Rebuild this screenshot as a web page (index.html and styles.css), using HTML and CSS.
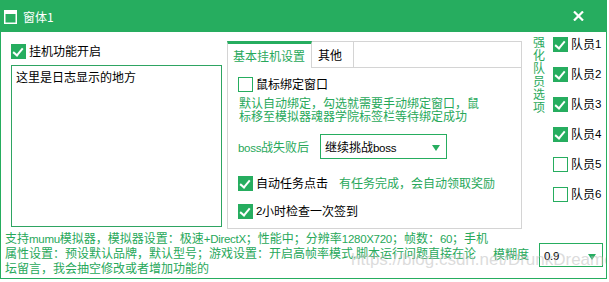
FILE: index.html
```html
<!DOCTYPE html>
<html lang="zh-CN">
<head>
    <meta charset="UTF-8">
    <title>窗体1</title>
    <link rel="stylesheet" href="styles.css">
</head>
<body>

<div class="window">
    <div class="titlebar">
        <svg class="app-icon" width="13" height="14" viewBox="0 0 13 14">
            <rect x="0.75" y="0.75" width="11.5" height="12.5" fill="none" stroke="#fff" stroke-width="1.5"/>
            <rect x="0" y="0" width="13" height="4" fill="#fff"/>
        </svg>
        <span class="title">窗体1</span>
        <svg class="close" width="11" height="10" viewBox="0 0 11 10">
            <path d="M1 0.5 L10 9.5 M10 0.5 L1 9.5" stroke="#fff" stroke-width="2.2"/>
        </svg>
    </div>

    <div class="panels">
        <!-- log column -->
        <div class="log-col">
            <div class="check"><span class="box on"></span>挂机功能开启</div>
            <div class="log">这里是日志显示的地方</div>
        </div>

        <!-- tab control -->
        <div class="tabs">
            <div class="tab-head">
                <span class="tab active">基本挂机设置</span>
                <span class="tab">其他</span>
                <span class="tab-fill"></span>
            </div>
            <div class="tab-body">
                <div class="check"><span class="box"></span>鼠标绑定窗口</div>
                <p class="hint desc">默认自动绑定，勾选就需要手动绑定窗口，鼠<br>标移至模拟器魂器学院标签栏等待绑定成功</p>
                <div class="boss-row">
                    <span class="hint boss-label"><span class="lat">boss</span>战失败后</span>
                    <div class="select boss-select">继续挑战<span class="lat">boss</span><span class="arrow"></span></div>
                </div>
                <div class="check task-row"><span class="box on"></span>自动任务点击<span class="hint task-hint">有任务完成，会自动领取奖励</span></div>
                <div class="check sign-row"><span class="box on"></span><span class="lat">2</span>小时检查一次签到</div>
            </div>
        </div>

        <!-- members -->
        <div class="members">
            <div class="vlabel">强化队员选项</div>
            <div class="member-list">
                <div class="check"><span class="box on"></span>队员<span class="lat">1</span></div>
                <div class="check"><span class="box on"></span>队员<span class="lat">2</span></div>
                <div class="check"><span class="box on"></span>队员<span class="lat">3</span></div>
                <div class="check"><span class="box on"></span>队员<span class="lat">4</span></div>
                <div class="check"><span class="box"></span>队员<span class="lat">5</span></div>
                <div class="check"><span class="box"></span>队员<span class="lat">6</span></div>
            </div>
        </div>
    </div>

    <div class="footer">
        <p class="hint notes">支持<span class="lat">mumu</span>模拟器，模拟器设置：极速<span class="lat">+DirectX</span>；性能中；分辨率<span class="lat">1280X720</span>；帧数：<span class="lat">60</span>；手机<br>属性设置：预设默认品牌，默认型号；游戏设置：开启高帧率模式<span class="lat">,</span>脚本运行问题直接在论<br>坛留言，我会抽空修改或者增加功能的</p>
        <span class="hint blur-label">模糊度</span>
        <div class="select blur-select"><span class="lat">0.9</span><span class="arrow"></span></div>
    </div>

    <div class="watermark">https://blog.csdn.net/DrunkDreamer</div>
</div>

</body>
</html>
```

FILE: styles.css
```css
body {
    margin: 0;
    padding: 0;
    background-color: #fff;
    font-family: "Noto Sans CJK SC", sans-serif;
    font-size: 12px;
    color: #000;
}
.lat {
    font-family: "Liberation Sans", sans-serif;
    font-size: 11.5px;
    letter-spacing: -0.3px;
}
.window {
    position: relative;
    width: 607px;
    height: 279px;
    box-sizing: border-box;
    border: 1px solid #26ad5f;
    border-top: none;
    background-color: #fff;
    overflow: hidden;
}
.titlebar {
    display: flex;
    align-items: center;
    height: 32px;
    margin: 0 -1px;
    padding: 0 4px;
    background-color: #26ad5f;
    color: #fff;
}
.app-icon {
    margin-top: 1px;
}
.title {
    margin-left: 6px;
    font-size: 12px;
}
.close {
    margin-left: auto;
    margin-right: 19px;
}

/* checkbox rows */
.check {
    display: flex;
    align-items: center;
    height: 16px;
    line-height: 16px;
    white-space: nowrap;
}
.box {
    position: relative;
    width: 15px;
    height: 15px;
    box-sizing: border-box;
    border: 1px solid #26ad5f;
    background-color: #fff;
    margin-right: 3px;
    flex: none;
}
.box.on {
    background-color: #26ad5f;
}
.box.on::after {
    content: "";
    position: absolute;
    left: 3px;
    top: 1px;
    width: 4px;
    height: 8px;
    border: solid #fff;
    border-width: 0 2px 2px 0;
    transform: rotate(40deg);
}
.hint {
    color: #27a85a;
}

.panels {
    display: flex;
    padding-left: 10px;
}
.log-col {
    width: 211px;
    padding-top: 11px;
}
.log {
    height: 162px;
    margin-top: 6px;
    box-sizing: border-box;
    border: 1px solid #2ea462;
    padding: 3px 4px;
    line-height: 16px;
}

/* tabs */
.tabs {
    width: 295px;
    height: 188px;
    margin-top: 9px;
    margin-left: 5px;
    box-sizing: border-box;
    border: 1px solid #d4d4d4;
    border-top: none;
    display: flex;
    flex-direction: column;
}
.tab-head {
    display: flex;
    height: 27px;
    margin: 0 -1px;
}
.tab {
    height: 27px;
    box-sizing: border-box;
    line-height: 26px;
    padding: 0 6px;
    border: 1px solid #d4d4d4;
    border-left: none;
    white-space: nowrap;
}
.tab.active {
    width: 85px;
    padding: 0 5px;
    color: #27a85a;
    border-top: 3px solid #26ad5f;
    border-left: 1px solid #d4d4d4;
    border-bottom: none;
    line-height: 24px;
}
.tab:nth-child(2) {
    width: 42px;
    padding: 0 6px;
}
.tab-fill {
    flex: 1;
    border: 1px solid #d4d4d4;
    border-left: none;
}
.tab-body {
    padding: 8px 10px 0 10px;
}
.desc {
    margin: 4px 0 0 1px;
    line-height: 13px;
}
.boss-row {
    display: flex;
    align-items: center;
    margin-top: 12px;
}
.boss-label {
    width: 82px;
}
.select {
    position: relative;
    box-sizing: border-box;
    border: 1px solid #26ad5f;
    padding-left: 4px;
    background-color: #fff;
}
.boss-select {
    width: 127px;
    height: 25px;
    line-height: 23px;
}
.arrow {
    position: absolute;
    right: 6px;
    top: 10px;
    width: 0;
    height: 0;
    border-left: 4px solid transparent;
    border-right: 4px solid transparent;
    border-top: 6px solid #26ad5f;
}
.task-row {
    margin-top: 16px;
}
.task-hint {
    margin-left: 11px;
}
.sign-row {
    margin-top: 12px;
}

/* members */
.members {
    display: flex;
    margin-left: 11px;
}
.vlabel {
    width: 12px;
    margin-top: 3px;
    line-height: 13px;
    color: #27a85a;
}
.member-list {
    margin-left: 8px;
    padding-top: 4px;
    display: flex;
    flex-direction: column;
    gap: 14px;
}

/* footer */
.footer {
    display: flex;
    align-items: flex-start;
    padding-left: 4px;
    margin-top: 2px;
}
.notes {
    width: 488px;
    margin: 0;
    line-height: 13px;
    white-space: nowrap;
}
.blur-label {
    margin-top: 16px;
    line-height: 13px;
}
.blur-select {
    width: 64px;
    height: 24px;
    line-height: 22px;
    margin-top: 12px;
    margin-left: 10px;
}
.watermark {
    position: absolute;
    left: 350px;
    top: 250px;
    font-family: "Liberation Sans", sans-serif;
    font-size: 17px;
    color: rgba(190, 190, 190, 0.55);
    white-space: nowrap;
    pointer-events: none;
}
```
